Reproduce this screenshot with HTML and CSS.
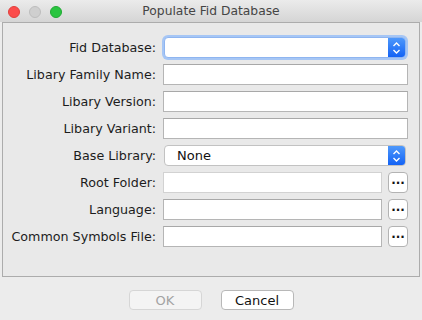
FILE: index.html
```html
<!doctype html>
<html lang="en">
<head>
    <meta charset="UTF-8">
    <title>Populate Fid Database</title>
    <link rel="stylesheet" href="styles.css">
</head>
<body>
<div class="window">
    <div class="titlebar">
        <div class="lights">
            <span class="light light--close"></span>
            <span class="light light--min"></span>
            <span class="light light--max"></span>
        </div>
        <div class="titlebar__title">Populate Fid Database</div>
    </div>
    <div class="content">
        <form class="panel">
            <label class="panel__label">Fid Database:</label>
            <div class="combo combo--focus">
                <span class="combo__value"></span>
                <span class="combo__stepper">
                    <svg width="9" height="14" viewBox="0 0 9 14"><path d="M1.5 5 L4.5 2 L7.5 5 M1.5 9 L4.5 12 L7.5 9" fill="none" stroke="#fff" stroke-width="1.4"/></svg>
                </span>
            </div>

            <label class="panel__label">Libary Family Name:</label>
            <input class="field" type="text">

            <label class="panel__label">Libary Version:</label>
            <input class="field" type="text">

            <label class="panel__label">Libary Variant:</label>
            <input class="field" type="text">

            <label class="panel__label">Base Library:</label>
            <div class="combo">
                <span class="combo__value">None</span>
                <span class="combo__stepper">
                    <svg width="9" height="14" viewBox="0 0 9 14"><path d="M1.5 5 L4.5 2 L7.5 5 M1.5 9 L4.5 12 L7.5 9" fill="none" stroke="#fff" stroke-width="1.4"/></svg>
                </span>
            </div>

            <label class="panel__label">Root Folder:</label>
            <div class="browse">
                <input class="field field--light" type="text">
                <button class="browse__btn" type="button">&middot;&middot;&middot;</button>
            </div>

            <label class="panel__label">Language:</label>
            <div class="browse">
                <input class="field" type="text">
                <button class="browse__btn" type="button">&middot;&middot;&middot;</button>
            </div>

            <label class="panel__label">Common Symbols File:</label>
            <div class="browse">
                <input class="field" type="text">
                <button class="browse__btn" type="button">&middot;&middot;&middot;</button>
            </div>
        </form>
        <div class="actions">
            <button class="btn btn--disabled" type="button">OK</button>
            <button class="btn" type="button">Cancel</button>
        </div>
    </div>
</div>
</body>
</html>
```

FILE: styles.css
```css
body {
    margin: 0;
    font-family: "DejaVu Sans", sans-serif;
    font-size: 12.7px;
    color: #1a1a1a;
}

.window {
    width: 422px;
    height: 320px;
    background: #ececec;
    display: flex;
    flex-direction: column;
}

.titlebar {
    flex: none;
    height: 22px;
    position: relative;
    background: linear-gradient(#ebebeb, #d5d5d5);
    display: flex;
    align-items: center;
    justify-content: center;
}

.lights {
    position: absolute;
    left: 8px;
    top: 6px;
    display: flex;
    gap: 9px;
}

.light {
    width: 12px;
    height: 12px;
    border-radius: 50%;
    box-sizing: border-box;
}

.light--close {
    background: #fc4c4b;
    border: 1px solid #e0403c;
}

.light--min {
    background: #cfcfcf;
    border: 1px solid #bdbdbd;
}

.light--max {
    background: #2ac540;
    border: 1px solid #20a933;
}

.titlebar__title {
    font-size: 12.3px;
    color: #454545;
}

.content {
    padding: 0 2px;
    display: flex;
    flex-direction: column;
}

.panel {
    box-sizing: border-box;
    height: 255px;
    border: 1px solid #acacac;
    background: #e9e9e9;
    padding: 14px 11px 0 0;
    display: grid;
    grid-template-columns: 153px 1fr;
    grid-auto-rows: 21px;
    align-content: start;
    column-gap: 7px;
    row-gap: 6px;
    margin: 0;
}

.panel__label {
    text-align: right;
    align-self: center;
    white-space: nowrap;
    color: #1c1c1c;
}

.field {
    box-sizing: border-box;
    width: 100%;
    height: 21px;
    margin: 0;
    padding: 0 4px;
    border: 1px solid #b5b5b5;
    border-top-color: #a8a8a8;
    background: #fff;
    outline: none;
}

.field--light {
    border-color: #d2d2d2;
}

.combo {
    box-sizing: border-box;
    height: 21px;
    margin: 0 2px 0 1px;
    border: 1px solid #c2c2c2;
    border-radius: 4px;
    background: #fff;
    display: flex;
    align-items: center;
    overflow: hidden;
}

.combo--focus {
    border-color: #8fb5f0;
    box-shadow: 0 0 0 2px #a6c6f5;
}

.combo__value {
    flex: 1;
    padding-left: 12px;
    font-size: 13px;
    color: #111;
}

.combo__stepper {
    width: 17px;
    align-self: stretch;
    background: linear-gradient(#4e98fb, #1463f5);
    display: flex;
    align-items: center;
    justify-content: center;
}

.browse {
    display: flex;
    gap: 6px;
}

.browse .field {
    flex: 1;
    width: auto;
    min-width: 0;
}

.browse__btn {
    flex: none;
    width: 20px;
    height: 21px;
    padding: 0;
    box-sizing: border-box;
    border: 1px solid #b3b3b3;
    border-radius: 4px;
    background: #fff;
    font-family: "DejaVu Sans", sans-serif;
    font-size: 12px;
    font-weight: bold;
    line-height: 1;
    color: #111;
}

.actions {
    display: flex;
    justify-content: center;
    gap: 19px;
    margin-top: 13px;
}

.btn {
    width: 73px;
    height: 20px;
    padding: 0;
    box-sizing: border-box;
    border: 1px solid #b8b8b8;
    border-radius: 4px;
    background: #fff;
    font-family: "DejaVu Sans", sans-serif;
    font-size: 13px;
    color: #111;
}

.btn--disabled {
    background: #f4f4f4;
    border-color: #d6d6d6;
    color: #a3a3a3;
}
```
